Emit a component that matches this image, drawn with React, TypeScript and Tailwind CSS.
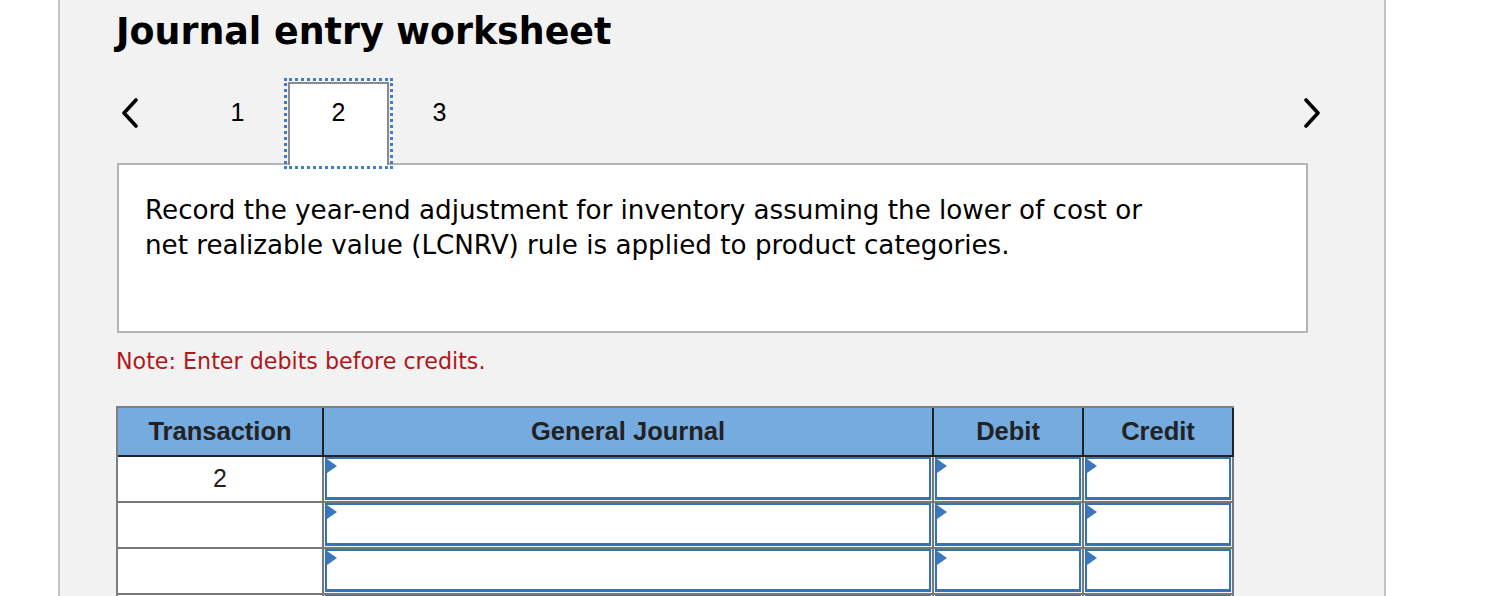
import React from "react";

const Chevron = ({ dir }: { dir: "left" | "right" }) => (
  <svg width="20" height="30" viewBox="0 0 20 30" className="block">
    {dir === "left" ? (
      <polyline points="16,2 4,15 16,28" fill="none" stroke="#000" strokeWidth="3.6" strokeLinecap="round" strokeLinejoin="round" />
    ) : (
      <polyline points="4,2 16,15 4,28" fill="none" stroke="#000" strokeWidth="3.6" strokeLinecap="round" strokeLinejoin="round" />
    )}
  </svg>
);

const InputCell = ({ w }: { w: string }) => (
  <div className={`${w} h-[46px] border-r-2 border-b-2 border-[#787878] p-px pt-0`}>
    <div className="relative w-full h-full bg-white border-2 border-b-[3px] border-[#3672b6]">
      <div className="absolute left-0 top-0 w-0 h-0 border-y-[7px] border-y-transparent border-l-[10px] border-l-[#3a77bd]" />
    </div>
  </div>
);

const Row = ({ tx }: { tx?: string }) => (
  <div className="flex">
    <div className="w-[206px] h-[46px] border-r-2 border-b-2 border-[#787878] bg-white flex items-center justify-center text-[25px] text-[#222]" style={{ fontFamily: '"Liberation Sans", Arial, sans-serif' }}>
      {tx}
    </div>
    <InputCell w="w-[610px]" />
    <InputCell w="w-[150px]" />
    <InputCell w="w-[150px]" />
  </div>
);

export default function App() {
  const sans = { fontFamily: '"DejaVu Sans", Verdana, sans-serif' };
  const arial = { fontFamily: '"Liberation Sans", Arial, sans-serif' };
  return (
    <div className="h-[596px] overflow-hidden bg-white pl-[58px]">
      <div className="w-[1328px] h-full border-x-2 border-[#c3c3c3] bg-[#f2f2f2] pl-[56px] pt-[11px]">
        <h1 className="text-[36.4px] leading-[42px] font-bold text-black" style={sans}>
          Journal entry worksheet
        </h1>

        <div className="flex items-start w-[1206px] mt-[29px] relative z-10" style={arial}>
          <div className="w-[71px] pt-[16px] pl-[4px]">
            <Chevron dir="left" />
          </div>
          <div className="w-[101px] h-[83px] pt-[16px] text-center text-[25px] leading-[28px] text-black">1</div>
          <div className="w-[101px] h-[83px] pt-[14px] text-center text-[25px] leading-[28px] text-black bg-white border-2 border-b-0 border-[#8a8a8a] outline-[3px] outline-dotted outline-[#3f7fc6] outline-offset-1">
            2
          </div>
          <div className="w-[101px] h-[83px] pt-[16px] text-center text-[25px] leading-[28px] text-black">3</div>
          <div className="flex-1" />
          <div className="pt-[16px]">
            <Chevron dir="right" />
          </div>
        </div>

        <div className="w-[1191px] h-[170px] -mt-[2px] ml-px border-2 border-[#b5b5b5] bg-white pl-[26px] pt-[28px] text-[26.2px] leading-[35px] text-black" style={sans}>
          Record the year-end adjustment for inventory assuming the lower of cost or
          <br />
          net realizable value (LCNRV) rule is applied to product categories.
        </div>

        <p className="mt-[15px] text-[22.2px] leading-[26px] text-[#b3161b]" style={sans}>
          Note: Enter debits before credits.
        </p>

        <div className="mt-[32px] w-[1118px] border-t-2 border-l-2 border-[#808080]">
          <div className="flex bg-[#76abe0] text-[25.5px] font-bold text-[#222]" style={arial}>
            <div className="w-[206px] h-[49px] border-r-2 border-b-2 border-[#222] flex items-center justify-center">Transaction</div>
            <div className="w-[610px] h-[49px] border-r-2 border-b-2 border-[#222] flex items-center justify-center">General Journal</div>
            <div className="w-[150px] h-[49px] border-r-2 border-b-2 border-[#222] flex items-center justify-center">Debit</div>
            <div className="w-[150px] h-[49px] border-r-2 border-b-2 border-[#222] flex items-center justify-center">Credit</div>
          </div>
          <Row tx="2" />
          <Row />
          <Row />
          <Row />
        </div>
      </div>
    </div>
  );
}
